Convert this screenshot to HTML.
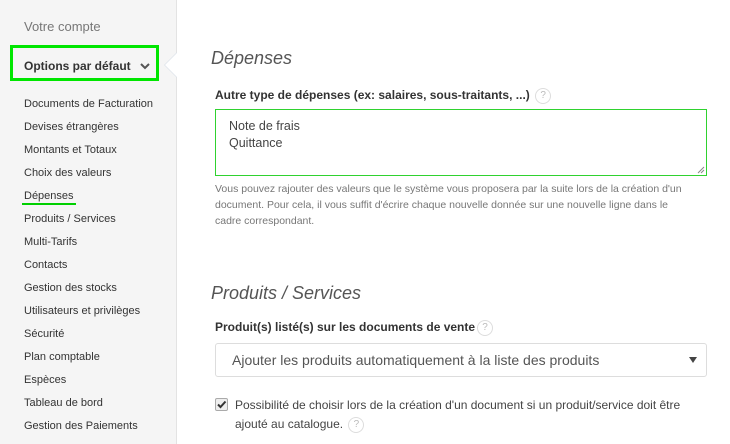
<!DOCTYPE html>
<html><head><meta charset="utf-8"><style>
*{box-sizing:border-box;margin:0;padding:0}
body{width:730px;height:444px;overflow:hidden;background:#fff;font-family:"Liberation Sans",Arial,sans-serif;color:#333;position:relative}
.side{position:absolute;left:0;top:0;width:177px;height:444px;background:#f5f5f5;border-right:1px solid #e3e3e3}
.notch{position:absolute;left:165px;top:53px;width:0;height:0;border-top:12px solid transparent;border-bottom:12px solid transparent;border-right:12px solid #fff}
.notchb{position:absolute;left:164px;top:52px;width:0;height:0;border-top:13px solid transparent;border-bottom:13px solid transparent;border-right:13px solid #dde3ea}
.acct{position:absolute;left:24px;top:19px;font-size:13px;color:#777}
.opt{position:absolute;left:10px;top:45px;width:149px;height:36px;border:3px solid #00e600;font-size:12px;font-weight:bold;color:#333;padding:11px 0 0 11px}
.opt svg{position:absolute;left:127px;top:15px}
.menu{position:absolute;left:24px;top:97px;font-size:11px;color:#333}
.menu div{height:23px;line-height:15px;position:relative}
.ul{position:absolute;left:-2px;top:14px;width:54px;height:2px;background:#00d000}
h2{position:absolute;font-weight:normal;font-style:italic;font-size:18px;color:#555}
.lbl{position:absolute;left:215px;font-size:12px;font-weight:bold;color:#333}
.q{display:inline-block;width:16px;height:16px;border:1px solid #ddd;border-radius:50%;font-size:10px;color:#bbb;text-align:center;line-height:14px;font-weight:normal;vertical-align:middle;margin-left:2px}
.ta{position:absolute;left:215px;top:109px;width:492px;height:67px;border:1px solid #2fd22f;font-size:12.5px;line-height:17px;padding:8px 0 0 13px;color:#444}
.help{position:absolute;left:215px;top:181px;width:478px;font-size:10.5px;line-height:16px;color:#777}
.sel{position:absolute;left:215px;top:343px;width:492px;height:34px;border:1px solid #ddd;border-radius:3px;font-size:14px;color:#555;padding:8px 0 0 16px}
.sel svg{position:absolute;right:9px;top:13px}
.cb{position:absolute;left:215px;top:398px;width:13px;height:13px;border:1px solid #aaa;border-radius:2px;background:#eee}
.ct{position:absolute;left:235px;top:396px;font-size:12px;line-height:19px;color:#444;width:480px}
</style></head><body>
<div class="side"></div>
<div class="notchb"></div><div class="notch"></div>
<div class="acct">Votre compte</div>
<div class="opt">Options par défaut<svg width="10" height="7" viewBox="0 0 10 7"><path d="M1 1l4 4 4-4" stroke="#555" stroke-width="2" fill="none"/></svg></div>
<div class="menu">
<div>Documents de Facturation</div><div>Devises étrangères</div><div>Montants et Totaux</div><div>Choix des valeurs</div><div>Dépenses<span class="ul"></span></div><div>Produits / Services</div><div>Multi-Tarifs</div><div>Contacts</div><div>Gestion des stocks</div><div>Utilisateurs et privilèges</div><div>Sécurité</div><div>Plan comptable</div><div>Espèces</div><div>Tableau de bord</div><div>Gestion des Paiements</div>
</div>
<h2 style="left:211px;top:48px">Dépenses</h2>
<div class="lbl" style="top:88px">Autre type de dépenses (ex: salaires, sous-traitants, ...) <span class="q">?</span></div>
<div class="ta">Note de frais<br>Quittance<svg style="position:absolute;right:1px;bottom:1px" width="8" height="8" viewBox="0 0 8 8"><path d="M7 1L1 7M7 4L4 7" stroke="#888" stroke-width="1"/></svg></div>
<div class="help">Vous pouvez rajouter des valeurs que le système vous proposera par la suite lors de la création d'un document. Pour cela, il vous suffit d'écrire chaque nouvelle donnée sur une nouvelle ligne dans le cadre correspondant.</div>
<h2 style="left:211px;top:283px">Produits / Services</h2>
<div class="lbl" style="top:320px">Produit(s) listé(s) sur les documents de vente<span class="q">?</span></div>
<div class="sel">Ajouter les produits automatiquement à la liste des produits<svg width="8" height="6" viewBox="0 0 8 6"><path d="M0 0h8L4 6z" fill="#444"/></svg></div>
<div class="cb"><svg width="11" height="11" viewBox="0 0 11 11" style="position:absolute;left:0;top:0"><path d="M2 5.5l2.5 2.5L9.5 2.5" stroke="#333" stroke-width="2" fill="none"/></svg></div>
<div class="ct">Possibilité de choisir lors de la création d'un document si un produit/service doit être ajouté au catalogue. <span class="q">?</span></div>
</body></html>
